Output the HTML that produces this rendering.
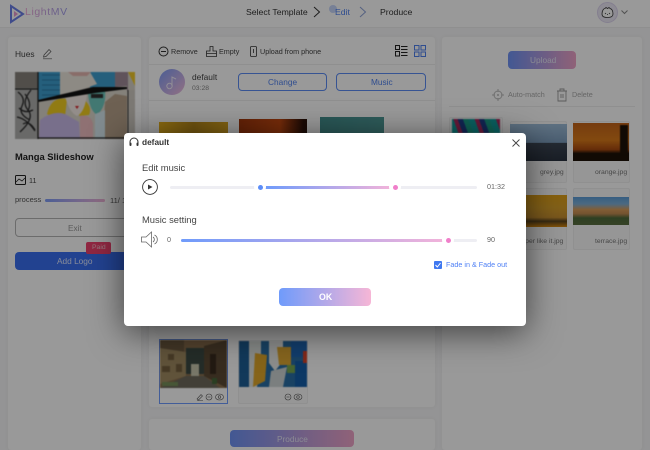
<!DOCTYPE html>
<html><head><meta charset="utf-8"><style>
*{box-sizing:border-box;margin:0;padding:0}
html,body{width:650px;height:450px;overflow:hidden;background:#f7f7f8;font-family:"Liberation Sans",sans-serif;color:#333}
.a{position:absolute}
.t{position:absolute;white-space:nowrap;line-height:12px}
.p{position:absolute;background:#fff;border-radius:3px;box-shadow:0 0 4px rgba(0,0,0,.05)}
.card{position:absolute;background:#fafafa;border:1px solid #f0f0f0;border-radius:2px}
.b{filter:blur(.5px)}
</style></head><body>
<!-- header -->
<div class="a" style="left:0;top:0;width:650px;height:28px;background:#fff;border-bottom:1px solid #eee"></div>
<svg class="a" style="left:9px;top:4px" width="16" height="20" viewBox="0 0 16 20"><path d="M2 2 L14 10 L2 18 Z" fill="none" stroke="#6c7fe8" stroke-width="2"/><path d="M5 7 L9 10 L5 13 Z" fill="#e79ad0"/></svg>
<div class="t" style="left:25px;top:5px;font-size:10.5px;line-height:14px;letter-spacing:.6px;width:60px;background:linear-gradient(90deg,#f0a8d8,#7a96f5);-webkit-background-clip:text;color:transparent">LightMV</div>
<div class="t" style="left:246px;top:6px;font-size:8.7px;color:#333">Select Template</div>
<svg class="a" style="left:313px;top:6px" width="8" height="12"><path d="M1 1 L6.500 6 L1 11" fill="none" stroke="#333"/></svg>
<div class="a" style="left:329px;top:5px;width:8px;height:8px;border-radius:50%;background:#c7d6fb"></div>
<div class="t" style="left:335px;top:6px;font-size:8.7px;color:#4f80ef">Edit</div>
<svg class="a" style="left:359px;top:6px" width="8" height="12"><path d="M1 1 L6.500 6 L1 11" fill="none" stroke="#8ea2d8"/></svg>
<div class="t" style="left:380px;top:6px;font-size:8.7px;color:#333">Produce</div>
<div class="a" style="left:597px;top:2px;width:21px;height:21px;border-radius:50%;background:#ece8f6;border:1px solid #dcd4ee"></div>
<svg class="a" style="left:600px;top:5px" width="15" height="15" viewBox="0 0 15 15"><path d="M2 9 C2 5 4 3.500 5 3.500 L6 2.500 L7.500 3.500 L9 2.500 L10 3.500 C12 4 13 6 13 9 C13 12 10.500 12.500 7.500 12.500 C4.500 12.500 2 12 2 9 Z" fill="#fff" stroke="#333" stroke-width=".8"/><path d="M5 8 L6 9 M10 8 L9 9 M7 9.500 L8 9.500" stroke="#333" stroke-width=".8"/></svg>
<svg class="a" style="left:621px;top:10px" width="7" height="5"><path d="M.5 .5 L3.500 3.500 L6.500 .5" fill="none" stroke="#888"/></svg>

<!-- left panel -->
<div class="p" style="left:8px;top:37px;width:133px;height:413px"></div>
<div class="t" style="left:15px;top:48px;font-size:8.4px;color:#444">Hues</div>
<svg class="a" style="left:42px;top:47px" width="11" height="13" viewBox="0 0 11 13"><path d="M2 8 L7 2.500 L9 4.500 L4 9.500 L1.500 10 Z M1 11.800 H10" fill="none" stroke="#555" stroke-width=".7"/></svg>
<svg class="a b" style="left:15px;top:72px" width="120" height="67" viewBox="0 0 120 67">
<rect width="120" height="67" fill="#d6d1c7"/>
<rect x="0" y="0" width="23" height="16" fill="#87837c"/>
<rect x="23" y="0" width="22" height="28" fill="#3f9fcf"/>
<path d="M27 3H45M27 8H45M27 13H45M27 18H45M27 23H45" stroke="#2c7aa6" stroke-width="1"/>
<rect x="75" y="0" width="30" height="19" fill="#3f9fcf"/>
<rect x="100" y="0" width="13" height="19" fill="#a08a98"/>
<path d="M113 0 H120 V14 Z" fill="#f0c92b"/>
<path d="M45 0 H75 L82 12 L60 20 L45 22 Z" fill="#ece6dc"/>
<path d="M53 0 H76 L72 4 H58 Z" fill="#e5b6b0"/>
<rect x="0" y="16" width="23" height="51" fill="#b0b0ae"/>
<path d="M3 20 q8 6 4 14 t8 14 M16 18 q-10 12 -3 20 t-8 22 M2 45 q10 2 18 14 M10 22 q8 10 2 18 M4 36 q6 6 14 2 M8 52 q6 -4 12 6" fill="none" stroke="#2a2a2a" stroke-width="1.300"/>
<path d="M24 28 L75 17 L112 14 V67 H24 Z" fill="#dcd7cc"/>
<path d="M32 42 Q36 24 52 27 L50 45 Q40 48 32 42 Z" fill="#f2cd20"/>
<path d="M67 26 Q78 34 74 43 L64 44 Z" fill="#f2cd20"/>
<path d="M24 66 L25 48 Q38 38 50 42 L64 50 L65 67 Z" fill="#c9b9e8"/>
<path d="M50 24 L72 22 Q70 40 62 44 Q54 40 50 24 Z" fill="#f6ece6"/>
<path d="M60 34 l4 0 l-2 3 z" fill="#d8252d"/>
<path d="M73 20 L90 17 Q92 34 82 43 Q74 38 73 20 Z" fill="#6ec8be"/>
<path d="M76 22 h12 v4 h-12z" fill="#2f2f2f"/>
<path d="M88 67 L90 30 L100 22 L112 24 V67 Z" fill="#b7a28a"/>
<path d="M80 67 V42 L90 38 V67 Z" fill="#d5e8ee"/>
<path d="M65 44 Q76 42 78 52 L78 67 H65 Z" fill="#eebcc0"/>
<path d="M23 28 L78 15 L112 15 L112 17 L80 21 L23 30 Z" fill="#111"/>
<path d="M23 0 V67 M0 17 H23 M23 66 H112" stroke="#222" stroke-width="1.300"/>
<path d="M113 18 V67" stroke="#333" stroke-width="1"/>
<rect x="114" y="18" width="6" height="49" fill="#cfcac2"/>
</svg>
<div class="t" style="left:15px;top:151px;font-size:9.4px;font-weight:bold;color:#222">Manga Slideshow</div>
<svg class="a" style="left:15px;top:175px" width="11" height="10" viewBox="0 0 11 10"><rect x=".5" y=".5" width="10" height="9" rx="1" fill="none" stroke="#222"/><path d="M1 7 L4 4 L7 6 L10 3" fill="none" stroke="#222" stroke-width=".8"/></svg>
<div class="t" style="left:29px;top:175px;font-size:7.200px;color:#444">11</div>
<div class="t" style="left:15px;top:194px;font-size:7.500px;color:#555">process</div>
<div class="a" style="left:45px;top:199px;width:60px;height:3px;border-radius:2px;background:linear-gradient(90deg,#7f9df8,#f3b5d9)"></div>
<div class="t" style="left:110px;top:195px;font-size:7.500px;color:#555">11/ 11</div>
<div class="a" style="left:15px;top:218px;width:120px;height:19px;border:1px solid #b5b5b5;border-radius:4px"></div>
<div class="t" style="left:68px;top:222px;font-size:8.300px;color:#999">Exit</div>
<div class="a" style="left:15px;top:252px;width:120px;height:18px;border-radius:4px;background:#3a6ff0"></div>
<div class="t" style="left:57px;top:255px;font-size:8.300px;color:#dfe7ff">Add Logo</div>
<div class="a" style="left:86px;top:242px;width:25px;height:12px;border-radius:2px;background:#f0426f"></div>
<div class="t" style="left:92px;top:243px;font-size:6.800px;line-height:10px;color:#f5c5cf">Paid</div>

<!-- middle panel -->
<div class="p" style="left:149px;top:37px;width:286px;height:370px"></div>
<div class="a" style="left:149px;top:64px;width:286px;height:1px;background:#eee"></div>
<div class="a" style="left:149px;top:100px;width:286px;height:1px;background:#eee"></div>
<svg class="a" style="left:158px;top:46px" width="11" height="11"><circle cx="5.500" cy="5.500" r="4.500" fill="none" stroke="#333"/><path d="M3 5.500 H8" stroke="#333"/></svg>
<div class="t" style="left:171px;top:46px;font-size:7.200px;color:#444">Remove</div>
<svg class="a" style="left:206px;top:46px" width="11" height="11" viewBox="0 0 11 11"><path d="M4 .5 H7 V5 H10.500 V10.500 H.5 V5 H4 Z M.5 7.500 H10.500" fill="none" stroke="#333" stroke-width=".8"/></svg>
<div class="t" style="left:219px;top:46px;font-size:7.200px;color:#444">Empty</div>
<svg class="a" style="left:250px;top:46px" width="7" height="11"><rect x=".5" y=".5" width="6" height="10" rx="1" fill="none" stroke="#333" stroke-width=".8"/><path d="M3.500 3 V7" stroke="#333" stroke-width=".8"/></svg>
<div class="t" style="left:260px;top:46px;font-size:7.200px;color:#444">Upload from phone</div>
<svg class="a" style="left:395px;top:45px" width="13" height="12"><rect x=".5" y=".5" width="4" height="4" fill="none" stroke="#222"/><rect x=".5" y="6.500" width="4" height="4.500" fill="none" stroke="#222"/><path d="M6 1.500H12.500M6 4.500H12.500M6 7.500H12.500M6 10.500H12.500" stroke="#222"/></svg>
<svg class="a" style="left:414px;top:45px" width="12" height="12"><rect x=".5" y=".5" width="4.500" height="4.500" fill="none" stroke="#4f80ef"/><rect x="7" y=".5" width="4.500" height="4.500" fill="none" stroke="#4f80ef"/><rect x=".5" y="7" width="4.500" height="4.500" fill="none" stroke="#4f80ef"/><rect x="7" y="7" width="4.500" height="4.500" fill="none" stroke="#4f80ef"/></svg>
<div class="a" style="left:159px;top:69px;width:26px;height:26px;border-radius:50%;background:linear-gradient(135deg,#7e9cf7,#f3bcdc)"></div>
<svg class="a" style="left:165px;top:75px" width="13" height="15" viewBox="0 0 13 15"><circle cx="4.500" cy="11" r="2.700" fill="none" stroke="#f0ecfa"/><path d="M7 11 V2 L11 4" fill="none" stroke="#f0ecfa"/></svg>
<div class="t" style="left:192px;top:71px;font-size:8.400px;color:#444">default</div>
<div class="t" style="left:192px;top:83px;font-size:6.800px;color:#888">03:28</div>
<div class="a" style="left:238px;top:73px;width:89px;height:18px;border:1px solid #5c8df5;border-radius:4px"></div>
<div class="t" style="left:268px;top:76px;font-size:8.300px;color:#4f80ef">Change</div>
<div class="a" style="left:336px;top:73px;width:90px;height:18px;border:1px solid #5c8df5;border-radius:4px"></div>
<div class="t" style="left:371px;top:76px;font-size:8.300px;color:#4f80ef">Music</div>
<div class="a" style="left:159px;top:122px;width:69px;height:12px;background:linear-gradient(90deg,#e9b21c,#b98a1a 50%,#d8a41e)"></div>
<div class="a" style="left:239px;top:119px;width:68px;height:15px;background:linear-gradient(90deg,#a3380d,#c74a10 60%,#2a1008 95%)"></div>
<div class="a" style="left:320px;top:117px;width:64px;height:17px;background:linear-gradient(100deg,#44908f,#4f9a98)"></div>
<div class="a" style="left:159px;top:339px;width:69px;height:65px;border:1px solid #6f9bff;background:#fff"></div>
<svg class="a b" style="left:160px;top:340px" width="67" height="48" viewBox="0 0 67 48"><rect width="67" height="48" fill="#8a6f4e"/><rect x="0" y="0" width="24" height="14" fill="#6e5a40"/><path d="M0 8 L26 12 V36 L0 44 Z" fill="#a08a62"/><path d="M8 14 h6 v6 h-6z M2 26 h8 v6 h-8z M16 24 h6 v8 h-6z" fill="#75603f"/><path d="M67 0 L44 6 V36 L67 48 Z" fill="#5c4a34"/><path d="M50 14 h6 v20 h-6z" fill="#3a2c1e"/><rect x="26" y="8" width="18" height="26" fill="#3c4a44"/><rect x="31" y="24" width="8" height="12" fill="#c9c6ae"/><path d="M0 48 L26 36 H44 L60 48 Z" fill="#6e6a5c"/><rect x="2" y="42" width="16" height="4" fill="#77905a"/><rect x="52" y="38" width="5" height="6" fill="#46683a"/></svg>
<svg class="a" style="left:196px;top:393px" width="30" height="8" viewBox="0 0 30 8"><path d="M1 6 L5 1.500 L6.500 3 L2.500 7 Z M1 7.800H7" fill="none" stroke="#555" stroke-width=".6"/><circle cx="13" cy="4" r="3" fill="none" stroke="#555" stroke-width=".6"/><path d="M11.500 4H14.500" stroke="#555" stroke-width=".6"/><ellipse cx="23.500" cy="4" rx="4" ry="3" fill="none" stroke="#555" stroke-width=".6"/><circle cx="23.500" cy="4" r="1.300" fill="none" stroke="#555" stroke-width=".6"/></svg>
<div class="card" style="left:238px;top:340px;width:70px;height:64px"></div>
<svg class="a b" style="left:239px;top:341px" width="68" height="46" viewBox="0 0 68 46"><rect width="68" height="46" fill="#2a6fa6"/><rect x="0" y="0" width="10" height="46" fill="#1f5f96"/><path d="M10 0 H22 V20 L18 46 H10 Z" fill="#dfe4e2"/><path d="M16 12 L28 14 L26 40 L14 46 Z" fill="#e0a72a"/><path d="M30 0 H44 V20 L36 30 L30 22 Z" fill="#e9ecea"/><path d="M38 6 H52 V24 H40 Z" fill="#dfa832"/><rect x="52" y="0" width="16" height="16" fill="#1e66b5"/><rect x="56" y="20" width="12" height="26" fill="#155ea8"/><path d="M32 30 L48 26 L44 46 H30 Z" fill="#cdd4d4"/><rect x="64" y="10" width="4" height="12" fill="#d8432a"/><rect x="48" y="24" width="8" height="8" fill="#79a850"/></svg>
<svg class="a" style="left:284px;top:393px" width="20" height="8" viewBox="0 0 20 8"><circle cx="4" cy="4" r="3" fill="none" stroke="#555" stroke-width=".6"/><path d="M2.500 4H5.500" stroke="#555" stroke-width=".6"/><ellipse cx="14" cy="4" rx="4" ry="3" fill="none" stroke="#555" stroke-width=".6"/><circle cx="14" cy="4" r="1.300" fill="none" stroke="#555" stroke-width=".6"/></svg>

<div class="p" style="left:149px;top:419px;width:286px;height:31px"></div>
<div class="a" style="left:230px;top:430px;width:124px;height:17px;border-radius:4px;background:linear-gradient(90deg,#6f93f5,#f0a3c8)"></div>
<div class="t" style="left:277px;top:433px;font-size:8.300px;color:#e6e6f5">Produce</div>

<!-- right panel -->
<div class="p" style="left:442px;top:37px;width:200px;height:413px"></div>
<div class="a" style="left:508px;top:51px;width:68px;height:18px;border-radius:4px;background:linear-gradient(90deg,#6f93f5,#f0a3c8)"></div>
<div class="t" style="left:530px;top:54px;font-size:8.300px;color:#e6e6f5">Upload</div>
<svg class="a" style="left:492px;top:89px" width="12" height="12"><circle cx="6" cy="6" r="4" fill="none" stroke="#bbb"/><circle cx="6" cy="6" r="1" fill="#bbb"/><path d="M6 0V3M6 9V12M0 6H3M9 6H12" stroke="#bbb"/></svg>
<div class="t" style="left:508px;top:89px;font-size:7.200px;color:#aaa">Auto-match</div>
<svg class="a" style="left:556px;top:88px" width="12" height="14" viewBox="0 0 12 14"><path d="M1 3H11M4 3V1H8V3M2 3V13H10V3M5 6V10M7 6V10" fill="none" stroke="#999" stroke-width=".9"/></svg>
<div class="t" style="left:572px;top:89px;font-size:7.200px;color:#aaa">Delete</div>
<div class="a" style="left:449px;top:106px;width:186px;height:1px;background:#eee"></div>
<div class="card" style="left:449px;top:117px;width:54px;height:20px"></div>
<div class="a b" style="left:452px;top:119px;width:48px;height:14px;background:repeating-linear-gradient(70deg,#12a0a0 0 6px,#b02a60 6px 10px,#1f3f8a 10px 15px,#1aa08a 15px 20px)"></div>
<div class="card" style="left:510px;top:121px;width:57px;height:62px"></div>
<div class="a" style="left:510px;top:124px;width:57px;height:37px;background:linear-gradient(180deg,#9dbcd8 0,#7c9cbc 50%,#3c4654 52%,#2b3340 100%)"></div>
<div class="t" style="left:540px;top:167px;font-size:6.800px;color:#777">grey.jpg</div>
<div class="card" style="left:573px;top:121px;width:57px;height:62px"></div>
<div class="a" style="left:573px;top:123px;width:56px;height:38px;background:linear-gradient(180deg,#c4641a 0,#d97a1a 45%,#a94a10 70%,#1d1208 80%)"></div>
<div class="a b" style="left:620px;top:125px;width:8px;height:30px;background:#1d1208"></div>
<div class="t" style="left:595px;top:167px;font-size:6.800px;color:#777">orange.jpg</div>
<div class="card" style="left:510px;top:188px;width:57px;height:62px"></div>
<div class="a" style="left:510px;top:195px;width:57px;height:32px;background:linear-gradient(180deg,#e0a018,#d8a02a 40%,#c89030 70%,#5a4520 82%,#d98a10)"></div>
<div class="t" style="left:518px;top:236px;font-size:6.800px;color:#777">super like it.jpg</div>
<div class="card" style="left:573px;top:188px;width:57px;height:62px"></div>
<div class="a" style="left:573px;top:197px;width:56px;height:28px;background:linear-gradient(180deg,#5c9cd8 0,#7fb0d8 25%,#d89c5a 45%,#c08a50 60%,#4d6a3a 75%,#5a6e40)"></div>
<div class="t" style="left:595px;top:236px;font-size:6.800px;color:#777">terrace.jpg</div>

<!-- overlay -->
<div class="a" style="left:0;top:0;width:650px;height:450px;background:rgba(0,0,0,.4)"></div>

<!-- modal -->
<div class="a" style="left:124px;top:133px;width:402px;height:193px;background:#fff;border-radius:4px;box-shadow:0 6px 34px rgba(0,0,0,.6)"></div>
<svg class="a" style="left:129px;top:137px" width="10" height="10" viewBox="0 0 10 10"><path d="M1 7 V5 A4 4 0 0 1 9 5 V7" fill="none" stroke="#333"/><rect x=".5" y="5.500" width="2" height="3.500" rx="1" fill="#333"/><rect x="7.500" y="5.500" width="2" height="3.500" rx="1" fill="#333"/></svg>
<div class="t" style="left:142px;top:136px;font-size:8.300px;font-weight:bold;color:#333">default</div>
<svg class="a" style="left:512px;top:139px" width="8" height="8"><path d="M.5 .5L7.500 7.500M7.500 .5L.5 7.500" stroke="#444" stroke-width=".9"/></svg>
<div class="t" style="left:142px;top:162px;font-size:9.400px;color:#444">Edit music</div>
<svg class="a" style="left:142px;top:179px" width="16" height="16"><circle cx="8" cy="8" r="7.400" fill="none" stroke="#333" stroke-width=".9"/><path d="M6 5.500 L10.500 8 L6 10.500 Z" fill="#333"/></svg>
<div class="a" style="left:170px;top:186px;width:307px;height:3px;border-radius:2px;background:#eeeef3"></div>
<div class="a" style="left:265px;top:186px;width:125px;height:3px;background:linear-gradient(90deg,#6f9bfb,#f1b3da)"></div>
<div class="a" style="left:254px;top:181px;width:12px;height:12px;border-radius:50%;background:#fff"></div>
<div class="a" style="left:257.500px;top:184.500px;width:5px;height:5px;border-radius:50%;background:#5c8df8"></div>
<div class="a" style="left:389px;top:181px;width:12px;height:12px;border-radius:50%;background:#fff"></div>
<div class="a" style="left:392.500px;top:184.500px;width:5px;height:5px;border-radius:50%;background:#f07fca"></div>
<div class="t" style="left:487px;top:181px;font-size:7.200px;color:#666">01:32</div>
<div class="t" style="left:142px;top:214px;font-size:9.400px;color:#444">Music setting</div>
<svg class="a" style="left:141px;top:231px" width="18" height="17" viewBox="0 0 18 17"><path d="M.5 6 H5 L10.500 1 V16 L5 11 H.5 Z" fill="none" stroke="#666" stroke-width=".8"/><path d="M12 6 A3 3 0 0 1 12 11 M13.500 4 A5 5 0 0 1 13.500 13" fill="none" stroke="#666" stroke-width=".8"/></svg>
<div class="t" style="left:167px;top:234px;font-size:7.200px;color:#666">0</div>
<div class="a" style="left:181px;top:238.500px;width:296px;height:3px;border-radius:2px;background:#eeeef3"></div>
<div class="a" style="left:181px;top:238.500px;width:262px;height:3px;border-radius:2px;background:linear-gradient(90deg,#6f9bfb,#f1b3da)"></div>
<div class="a" style="left:442px;top:234px;width:12px;height:12px;border-radius:50%;background:#fff"></div>
<div class="a" style="left:445.500px;top:237.500px;width:5px;height:5px;border-radius:50%;background:#f07fca"></div>
<div class="t" style="left:487px;top:234px;font-size:7.200px;color:#666">90</div>
<div class="a" style="left:434px;top:261px;width:8px;height:8px;background:#3f78f0;border-radius:1px"></div>
<svg class="a" style="left:434px;top:261px" width="8" height="8"><path d="M1.500 4 L3.300 6 L6.500 2" fill="none" stroke="#fff"/></svg>
<div class="t" style="left:446px;top:259px;font-size:7.200px;color:#4f80f5">Fade in &amp; Fade out</div>
<div class="a" style="left:279px;top:288px;width:92px;height:18px;border-radius:4px;background:linear-gradient(90deg,#6f9bfb,#f6b6d6)"></div>
<div class="t" style="left:319px;top:291px;font-size:8.800px;font-weight:bold;color:#fff">OK</div>
</body></html>
